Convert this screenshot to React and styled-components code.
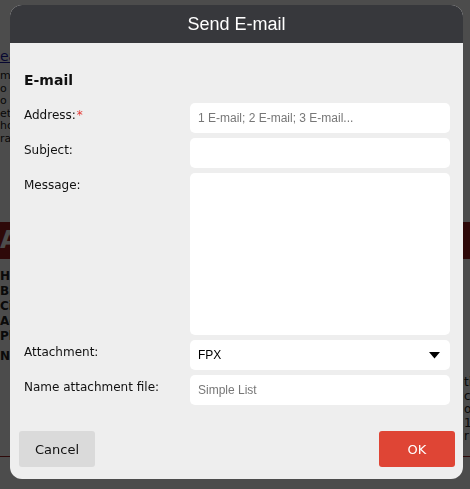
import React from "react"
import styled, { createGlobalStyle } from "styled-components"

const GlobalStyle = createGlobalStyle`
  html, body {
    margin: 0;
    padding: 0;
    background: #ffffff;
  }
  * { box-sizing: border-box; }
`

const BackLine = ({ children, bold }) => <PageLine $bold={bold}>{children}</PageLine>

export default function App() {
    return (
        <>
            <GlobalStyle />
            <Page>
                <LeftCol>
                    <PageLink>ea</PageLink>
                    <PageText>
                        <BackLine>m</BackLine>
                        <BackLine>o</BackLine>
                        <BackLine>o</BackLine>
                        <BackLine>etr</BackLine>
                        <BackLine>ho</BackLine>
                        <BackLine>ra</BackLine>
                    </PageText>
                </LeftCol>
                <Band>Ar</Band>
                <InfoList>
                    <BackLine bold>Hi</BackLine>
                    <BackLine bold>Bi</BackLine>
                    <BackLine bold>Ci</BackLine>
                    <BackLine bold>Ad</BackLine>
                    <BackLine bold>Ph</BackLine>
                    <NoteLine>No</NoteLine>
                </InfoList>
                <RightText>
                    <BackLine>ti</BackLine>
                    <BackLine>ca</BackLine>
                    <BackLine>o</BackLine>
                    <BackLine>10</BackLine>
                    <BackLine>r</BackLine>
                </RightText>
                <PageRule />
            </Page>

            <Overlay>
                <Dialog>
                    <Header>Send E-mail</Header>
                    <Body>
                        <SectionTitle>E-mail</SectionTitle>
                        <Form>
                            <Label>Address:<Req>*</Req></Label>
                            <Input placeholder="1 E-mail; 2 E-mail; 3 E-mail..." />
                            <Label>Subject:</Label>
                            <Input />
                            <Label>Message:</Label>
                            <TextArea />
                            <Label>Attachment:</Label>
                            <Select>
                                <span>FPX</span>
                                <svg width="11" height="7" viewBox="0 0 11 7">
                                    <path d="M0 0 L11 0 L5.5 6.5 Z" fill="#000" />
                                </svg>
                            </Select>
                            <Label>Name attachment file:</Label>
                            <Input placeholder="Simple List" />
                        </Form>
                    </Body>
                    <Footer>
                        <Button>Cancel</Button>
                        <Button $primary>OK</Button>
                    </Footer>
                </Dialog>
            </Overlay>
        </>
    )
}

const Page = styled.div`
width: 470px;
height: 489px;
display: flex;
flex-direction: column;
font-family: "DejaVu Sans", sans-serif;
font-size: 11px;
color: #222;
padding-top: 48px;
overflow: hidden;
`
const LeftCol = styled.div`
display: flex;
flex-direction: column;
`
const PageLink = styled.a`
color: #1a1aa6;
text-decoration: underline;
font-size: 14px;
line-height: 16px;
`
const PageText = styled.div`
margin-top: 6px;
display: flex;
flex-direction: column;
`
const PageLine = styled.div`
line-height: 12.5px;
font-weight: ${p => (p.$bold ? "bold" : "normal")};
font-size: ${p => (p.$bold ? "12px" : "11px")};
`
const Band = styled.div`
margin-top: 77px;
height: 37px;
background: #9c1f1f;
color: #fff;
font-weight: bold;
font-size: 24px;
line-height: 37px;
`
const InfoList = styled.div`
margin-top: 10px;
display: flex;
flex-direction: column;
& > div { line-height: 15px; }
`
const NoteLine = styled.div`
margin-top: 5px;
font-weight: bold;
font-size: 12px;
`
const RightText = styled.div`
margin-top: 12px;
padding-left: 464px;
display: flex;
flex-direction: column;
white-space: nowrap;
& > div { line-height: 13.5px; font-size: 12px; }
`
const PageRule = styled.div`
margin-top: 12px;
height: 1px;
background: #9c1f1f;
`
const Overlay = styled.div`
position: fixed;
inset: 0;
background: rgba(0, 0, 0, 0.7);
display: flex;
align-items: flex-start;
padding: 5px 0 0 10px;
`
const Dialog = styled.div`
width: 453px;
background: #eeeeee;
border-radius: 12px;
overflow: hidden;
display: flex;
flex-direction: column;
`
const Header = styled.div`
height: 38px;
background: #37383c;
color: #ffffff;
font-family: "Liberation Sans", Arial, sans-serif;
font-size: 18px;
display: flex;
align-items: center;
justify-content: center;
`
const Body = styled.div`
padding: 29px 14px 0 14px;
`
const SectionTitle = styled.div`
font-family: "DejaVu Sans", sans-serif;
font-weight: bold;
font-size: 14px;
line-height: 17px;
color: #111;
margin-bottom: 14px;
`
const Form = styled.div`
display: grid;
grid-template-columns: 166px 260px;
grid-auto-rows: auto;
row-gap: 5px;
`
const Label = styled.div`
font-family: "DejaVu Sans", sans-serif;
font-size: 12px;
line-height: 16px;
color: #111;
padding-top: 4px;
`
const Req = styled.span`
color: #e53935;
margin-left: 1px;
`
const fieldBase = `
width: 100%;
border: none;
outline: none;
background: #ffffff;
border-radius: 5px;
font-family: "Liberation Sans", Arial, sans-serif;
font-size: 12px;
color: #000;
padding: 0 8px;
`
const Input = styled.input`
${fieldBase}
height: 30px;
&::placeholder { color: #777; }
`
const TextArea = styled.textarea`
${fieldBase}
height: 162px;
resize: none;
display: block;
`
const Select = styled.div`
${fieldBase}
height: 30px;
display: flex;
align-items: center;
justify-content: space-between;
padding-right: 10px;
`
const Footer = styled.div`
display: flex;
justify-content: space-between;
padding: 26px 8px 12px 9px;
`
const Button = styled.button`
width: 76px;
height: 36px;
border: none;
border-radius: 3px;
background: ${p => (p.$primary ? "#df4535" : "#dadada")};
color: ${p => (p.$primary ? "#ffffff" : "#111")};
font-family: "DejaVu Sans", sans-serif;
font-size: 13px;
cursor: pointer;
`
